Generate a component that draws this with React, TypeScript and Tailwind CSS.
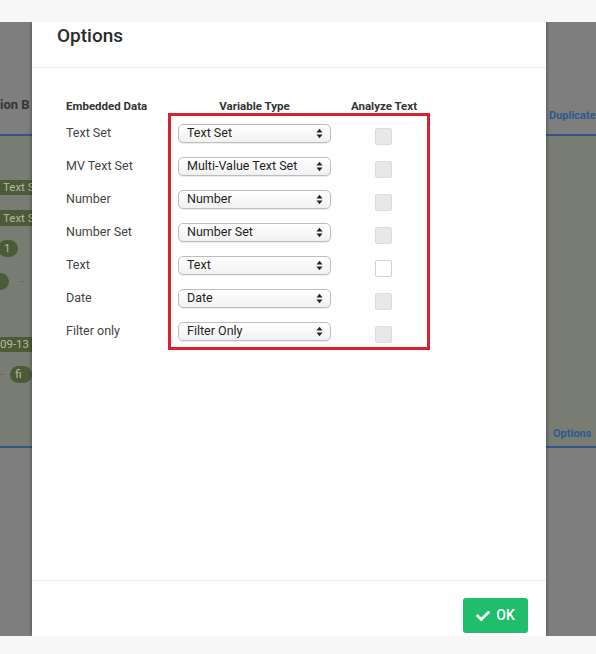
import React from 'react';
import { FaCheck } from 'react-icons/fa';

interface FieldRow {
  label: string;
  type: string;
  enabled: boolean;
}

const fieldRows: FieldRow[] = [
  { label: 'Text Set', type: 'Text Set', enabled: false },
  { label: 'MV Text Set', type: 'Multi-Value Text Set', enabled: false },
  { label: 'Number', type: 'Number', enabled: false },
  { label: 'Number Set', type: 'Number Set', enabled: false },
  { label: 'Text', type: 'Text', enabled: true },
  { label: 'Date', type: 'Date', enabled: false },
  { label: 'Filter only', type: 'Filter Only', enabled: false },
];

const SelectArrows = () => (
  <svg width="7" height="11" viewBox="0 0 7 11" className="shrink-0">
    <path d="M0.5 4.5 L3.5 0.8 L6.5 4.5 Z" fill="#222" />
    <path d="M0.5 6.5 L3.5 10.2 L6.5 6.5 Z" fill="#222" />
  </svg>
);

const TypeSelect = ({ value }: { value: string }) => (
  <div className="flex h-[19px] w-[153px] items-center justify-between rounded-[5px] border border-[#bdbdbd] bg-gradient-to-b from-white to-[#f1f1f1] pl-[8px] pr-[7px] shadow-[0_1px_1px_rgba(0,0,0,0.08)]">
    <span className="text-[12.5px] leading-none text-[#1f1f1f]">{value}</span>
    <SelectArrows />
  </div>
);

// dimmed page behind the dialog, left edge
const LeftBackdrop = () => (
  <div className="flex w-[32px] shrink-0 flex-col overflow-hidden">
    <div className="h-[112px] bg-[#7e7e7e] pt-[75px]">
      <div className="whitespace-nowrap text-[13px] font-bold leading-[15px] text-[#353535]">ion B</div>
    </div>
    <div className="h-[2px] bg-[#34558c]" />
    <div className="flex h-[310px] flex-col bg-[#797c72] text-[11.5px] leading-[15px] text-[#b4baa6]">
      <div className="mt-[44px] h-[15px] whitespace-nowrap bg-[#4b5b37] pl-[3px]">Text S</div>
      <div className="mt-[15px] h-[16px] whitespace-nowrap bg-[#4b5b37] pl-[3px] leading-[16px]">Text S</div>
      <div className="mt-[14px] h-[17px] w-[20px] -ml-[2px] rounded-full bg-[#4b5b37] pl-[6px] leading-[17px]">1</div>
      <div className="mt-[16px] flex h-[17px] items-center">
        <div className="h-[17px] w-[19px] -ml-[10px] rounded-full bg-[#4b5b37]" />
        <span className="ml-[12px] text-[#5e6258]">-</span>
      </div>
      <div className="mt-[47px] h-[15px] whitespace-nowrap rounded-l-full bg-[#4b5b37] -ml-[6px] pl-[6px] leading-[15px]">09-13</div>
      <div className="mt-[14px] flex h-[17px] items-center">
        <span className="w-[15px] text-[#5e6258]">-</span>
        <div className="h-[17px] w-[30px] whitespace-nowrap rounded-full bg-[#4b5b37] pl-[5px] leading-[17px]">fi</div>
      </div>
    </div>
    <div className="h-[2px] bg-[#34558c]" />
    <div className="flex-1 bg-[#7e7e7e]" />
  </div>
);

// dimmed page behind the dialog, right edge
const RightBackdrop = () => (
  <div className="flex min-w-0 flex-1 flex-col overflow-hidden">
    <div className="h-[112px] bg-[#7e7e7e] pl-[3px] pt-[87px]">
      <div className="whitespace-nowrap text-[11px] font-bold leading-[13px] text-[#2e5a8d]">Duplicate</div>
    </div>
    <div className="h-[2px] bg-[#34558c]" />
    <div className="flex h-[310px] flex-col justify-end bg-[#797c72] pb-[6px] pl-[7px]">
      <div className="whitespace-nowrap text-[11px] font-bold leading-[13px] text-[#2e5a8d]">Options</div>
    </div>
    <div className="h-[2px] bg-[#34558c]" />
    <div className="flex-1 bg-[#7e7e7e]" />
  </div>
);

const App: React.FC = () => {
  return (
    <div className="flex h-[654px] w-[596px] flex-col overflow-hidden bg-[#7e7e7e] font-['Roboto','Liberation_Sans',sans-serif]">
      <div className="relative z-20 h-[22px] shrink-0 bg-[#f7f7f7]" />

      <div className="flex h-[614px] shrink-0">
        <LeftBackdrop />

        {/* Dialog */}
        <div className="relative z-10 flex w-[514px] shrink-0 flex-col bg-white shadow-[0_0_4px_rgba(0,0,0,0.45)]">
          <div className="h-[46px] border-b border-[#ededed] pl-[25px] pt-[2px]">
            <h2 className="text-[19px] font-medium leading-[24px] text-[#2b2b2b]">Options</h2>
          </div>

          <div className="flex flex-1 pl-[34px] pt-[31px]">
            {/* Embedded data names */}
            <div className="w-[102px]">
              <div className="h-[14px] text-[11.5px] font-bold leading-[14px] text-[#333]">Embedded Data</div>
              <div className="mt-[11px] flex flex-col gap-[14px]">
                {fieldRows.map((row) => (
                  <div key={row.label} className="flex h-[19px] items-center text-[12.5px] text-[#444]">
                    {row.label}
                  </div>
                ))}
              </div>
            </div>

            <div className="w-[262px]">
              <div className="flex h-[14px] pl-[10px] text-[11.5px] font-bold leading-[14px] text-[#333]">
                <span className="w-[153px] text-center">Variable Type</span>
                <span className="ml-[13px] w-[80px] text-center">Analyze Text</span>
              </div>

              {/* highlighted area */}
              <div className="flex flex-col gap-[14px] border-[3px] border-[#d9202e] pb-[6px] pl-[7px] pt-[8px]">
                {fieldRows.map((row) => (
                  <div key={row.label} className="flex h-[19px] items-start">
                    <TypeSelect value={row.type} />
                    <div
                      className={`ml-[44px] mt-[4px] h-[17px] w-[17px] rounded-[2px] border ${
                        row.enabled ? 'border-[#d2d2d2] bg-white' : 'border-[#dcdcdc] bg-[#e8e8e8]'
                      }`}
                    />
                  </div>
                ))}
              </div>
            </div>
          </div>

          <div className="flex h-[56px] items-start justify-end border-t border-[#ededed] pr-[18px] pt-[17px]">
            <button className="flex h-[35px] w-[65px] items-center justify-center gap-[6px] rounded-[3px] bg-[#1fbe6c] text-[14px] font-medium text-white">
              <FaCheck className="h-[14px] w-[14px]" />
              OK
            </button>
          </div>
        </div>

        <RightBackdrop />
      </div>

      <div className="relative z-20 flex-1 bg-[#f7f7f7]" />
    </div>
  );
};

export default App;
